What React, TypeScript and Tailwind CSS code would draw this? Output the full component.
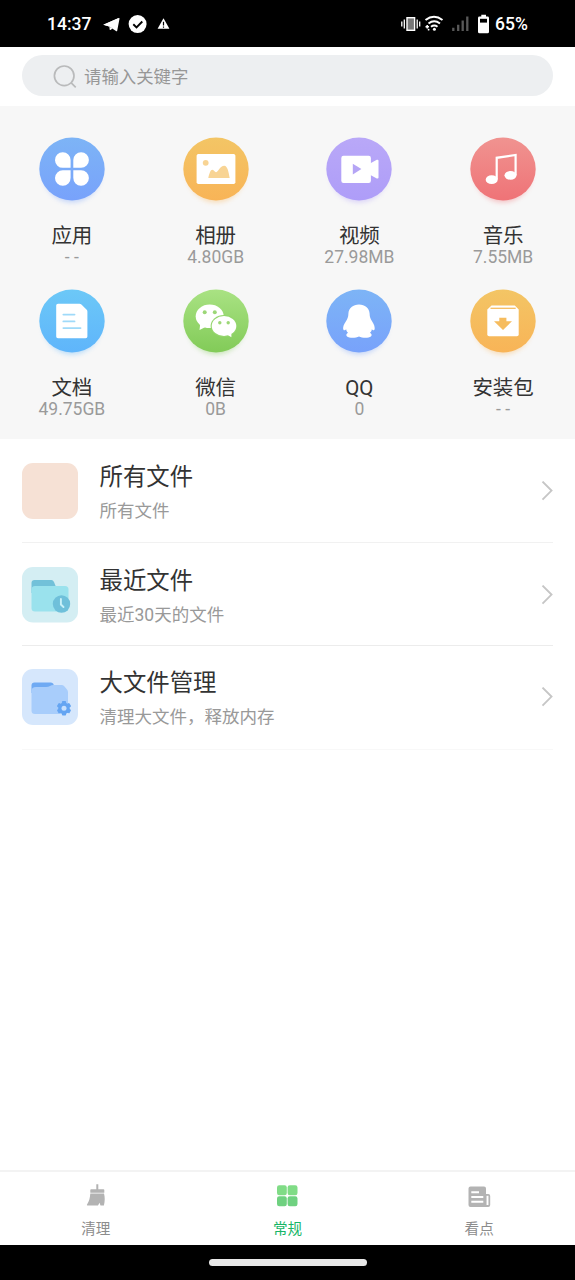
import type { ReactNode } from 'react';

type Category = {
  id: string;
  label: string;
  size: string;
  from: string;
  to: string;
  glyph: ReactNode;
};

const categories: Category[] = [
  {
    id: 'apps',
    label: '应用',
    size: '- -',
    from: '#7db4f6',
    to: '#78a2fb',
    glyph: (
      <>
        <path d="M-1.4-1.2H-9A7.8 7.8 0 1 1-1.4-9Z" />
        <path d="M1.3-1.2H9.1A7.8 7.8 0 1 0 1.3-9Z" />
        <path d="M-1.4 1.2H-9A7.8 7.8 0 1 0-1.4 8.8Z" />
        <path d="M1.3 1.2H9.1A7.8 7.8 0 1 1 1.3 8.8Z" />
      </>
    ),
  },
  {
    id: 'photos',
    label: '相册',
    size: '4.80GB',
    from: '#f3c565',
    to: '#f8b457',
    glyph: (
      <>
        <rect x="-19.4" y="-15" width="38.8" height="30" rx="1.8" />
        <circle cx="-10.3" cy="-6.2" r="2.9" fill="#f8d494" />
        <path
          d="M-7.7 8.9C-6.5 4-5.5 0.8-3.6 0.8C-1.8 0.8-1.5 3.2 0 3.2C2 3.2 4-3.3 8.3-3.3C11.6-3.3 12.7 3.5 13.7 8.9Z"
          fill="#f8d494"
        />
      </>
    ),
  },
  {
    id: 'videos',
    label: '视频',
    size: '27.98MB',
    from: '#b9a8f8',
    to: '#ae9df8',
    glyph: (
      <>
        <rect x="-17.7" y="-13.3" width="29.6" height="27.2" rx="2.2" />
        <path d="M11-5.5 17.8-9.2Q19.5-9.8 19.5-8.2V8.4Q19.5 10 17.8 9.4L11 5.8Z" />
        <path d="M-6.2-5.2 2.4 0.1-6.2 5.4Z" fill="#b5a5f5" />
      </>
    ),
  },
  {
    id: 'music',
    label: '音乐',
    size: '7.55MB',
    from: '#f09390',
    to: '#ef7377',
    glyph: (
      <>
        <ellipse cx="-11.3" cy="10.7" rx="6" ry="4.4" />
        <ellipse cx="7.5" cy="6.3" rx="6" ry="4.4" />
        <path
          d="M-6.3 10.5V-11.2L12.6-14V6"
          fill="none"
          stroke="#fff"
          strokeWidth="2.2"
        />
      </>
    ),
  },
  {
    id: 'docs',
    label: '文档',
    size: '49.75GB',
    from: '#6cc8f7',
    to: '#5fb5fb',
    glyph: (
      <>
        <path d="M-14-17.3H7.5Q8.6-17.3 9.4-16.6L14.7-11.3Q15.4-10.6 15.4-9.5V15.5Q15.4 17.3 13.6 17.3H-14Q-15.8 17.3-15.8 15.5V-15.5Q-15.8-17.3-14-17.3Z" />
        <path
          d="M-8.6-6.4H2.5M-8.6 0.4H2.5M-8.6 7.1H8.5"
          stroke="#9fdaf9"
          strokeWidth="1.9"
          strokeLinecap="round"
        />
      </>
    ),
  },
  {
    id: 'wechat',
    label: '微信',
    size: '0B',
    from: '#a9e283',
    to: '#82cb58',
    glyph: (
      <>
        <ellipse cx="-6.3" cy="-4.7" rx="14" ry="11.8" />
        <path d="M-15.8 3-16.5 9-9.5 5.5Z" />
        <ellipse cx="8" cy="5" rx="13.4" ry="11.1" fill="#94d66d" />
        <ellipse cx="8" cy="5" rx="12.3" ry="10" />
        <path d="M10 13 15.4 16.2 15.4 10Z" />
        <g fill="#9cd777">
          <circle cx="-11.3" cy="-8.7" r="2" />
          <circle cx="-1.2" cy="-8.7" r="2" />
          <circle cx="3.8" cy="1.7" r="1.7" />
          <circle cx="12.2" cy="1.7" r="1.7" />
        </g>
      </>
    ),
  },
  {
    id: 'qq',
    label: 'QQ',
    size: '0',
    from: '#7db4f6',
    to: '#78a2fb',
    glyph: (
      <path d="M0-16.5C6-16.5 10.2-13 10.6-7.5C10.7-5 11-3.5 12-1.5C13.8 1.5 15.6 4 15.7 7C15.8 9.8 14.2 9.8 12.8 8.2C12.8 9.5 12 10.9 11 11.8C13.9 13.4 13 16.5 8 16.8C4.5 17 2 16.4 0 15.4C-2 16.4-4.5 17-8 16.8C-13 16.5-13.9 13.4-11 11.8C-12 10.9-12.8 9.5-12.8 8.2C-14.2 9.8-15.9 9.8-15.9 7C-15.7 4-13.8 1.5-12-1.5C-11-3.5-10.7-5-10.6-7.5C-10.2-13-6-16.5 0-16.5Z" />
    ),
  },
  {
    id: 'packages',
    label: '安装包',
    size: '- -',
    from: '#f3c565',
    to: '#f8b457',
    glyph: (
      <>
        <path d="M-11.5-15.4H11.8L15.7-11.5V13.5Q15.7 15.3 13.9 15.3H-13.9Q-15.7 15.3-15.7 13.5V-11.5Z" />
        <path d="M-12.5-12.7H12.7" stroke="#f6bc5e" strokeWidth="1.3" />
        <path d="M-3.7-3.2H3.4V0.2H9L0 9-9 0.2H-3.7Z" fill="#f6bc5e" />
      </>
    ),
  },
];

const CategoryIcon = ({ id, from, to, glyph }: Category) => (
  <svg className="w-20 h-20" viewBox="-40 -40 80 80">
    <defs>
      <linearGradient id={`fill-${id}`} x1="0" y1="0" x2="0" y2="1">
        <stop offset="0" stopColor={from} />
        <stop offset="1" stopColor={to} />
      </linearGradient>
      <filter id={`blur-${id}`} x="-30%" y="-30%" width="160%" height="160%">
        <feGaussianBlur stdDeviation="2.5" />
      </filter>
    </defs>
    <ellipse cx="0" cy="4" rx="29" ry="29.5" fill={to} opacity="0.4" filter={`url(#blur-${id})`} />
    <ellipse cx="0" cy="0" rx="32.7" ry="31.4" fill={`url(#fill-${id})`} />
    <g fill="#fff">{glyph}</g>
  </svg>
);

const RecentIcon = () => (
  <svg className="w-14 h-14" viewBox="0 0 56 56">
    <rect width="56" height="55.5" rx="11" fill="#d4eef3" />
    <path d="M9.500 24V16Q9.500 13 12.500 13H29.500Q31 13 32 15L34 20V26H9.500Z" fill="#72c1d9" />
    <rect x="9.5" y="19" width="37" height="25.5" rx="3.5" fill="#9ae2ed" />
    <circle cx="39.5" cy="37" r="8.7" fill="#6fc0da" />
    <path d="M38.9 32V37.5L41.5 40" fill="none" stroke="#c9f1f8" strokeWidth="1.9" strokeLinecap="round" />
  </svg>
);

const LargeIcon = () => (
  <svg className="w-14 h-14" viewBox="0 0 56 56">
    <rect width="56" height="56" rx="11" fill="#d6e7fc" />
    <path d="M9.5 24V16.5Q9.5 13.5 12.5 13.5H29Q30.500 13.500 31.500 15L32 20V24Z" fill="#6faaf3" />
    <path d="M9.5 22Q9.5 18 14 18H24Q26.500 18 28 17Q29.500 16 31.500 16H40Q41.500 16 42.500 17.500L45 20.500Q46 21.500 46 23.500V41.500Q46 45 42.500 45H13Q9.500 45 9.500 41.500Z" fill="#a8cdfb" />
    <g fill="#65a5f2">
      <circle cx="42" cy="39.2" r="5.7" />
      <rect x="39.9" y="32" width="4.2" height="14.4" rx="1" />
      <rect x="39.9" y="32" width="4.2" height="14.4" rx="1" transform="rotate(60 42 39.2)" />
      <rect x="39.9" y="32" width="4.2" height="14.4" rx="1" transform="rotate(120 42 39.2)" />
    </g>
    <circle cx="42" cy="39.2" r="2.5" fill="#c7e0fe" />
  </svg>
);

const folders = [
  {
    title: '所有文件',
    subtitle: '所有文件',
    icon: <div className="w-14 h-14 rounded-[11px] bg-[#f6e1d5]" />,
    row: 'h-[104px] border-[#f1f1f1]',
  },
  {
    title: '最近文件',
    subtitle: '最近30天的文件',
    icon: <RecentIcon />,
    row: 'h-[103px] pt-px border-[#ececec]',
  },
  {
    title: '大文件管理',
    subtitle: '清理大文件，释放内存',
    icon: <LargeIcon />,
    row: 'h-[104px] pb-px border-[#f8f8f8]',
  },
];

const tabs = [
  {
    label: '清理',
    color: 'text-[#8c8c8c]',
    icon: (
      <svg className="w-7 h-7" viewBox="0 0 28 28" fill="#b3b3b3">
        <path d="M14.3 2.3H16.3V7.3H21.5Q22.3 7.3 22.3 8.1V10.8H8.3V8.1Q8.3 7.3 9.1 7.3H14.3Z" />
        <path d="M8.3 11.6H22C23 15 23 19.300 21.900 23.500H18.500L17.500 20.800 16 23.500H5.300Q4.400 23.200 5.300 22C7.200 19.500 7.900 16 8.300 11.600Z" />
      </svg>
    ),
  },
  {
    label: '常规',
    color: 'text-[#16b567]',
    icon: (
      <svg className="w-7 h-7" viewBox="0 0 28 28">
        <rect x="4" y="3.3" width="9.8" height="10" rx="2.2" fill="#80dc86" />
        <rect x="14.6" y="3.3" width="9.9" height="10" rx="2.2" fill="#80dc86" />
        <rect x="4" y="14.2" width="9.8" height="10" rx="2.2" fill="#6fd180" />
        <rect x="14.6" y="14.2" width="9.9" height="10" rx="2.2" fill="#6fd180" />
      </svg>
    ),
  },
  {
    label: '看点',
    color: 'text-[#8c8c8c]',
    icon: (
      <svg className="w-7 h-7" viewBox="0 0 28 28">
        <path d="M5.500 4.500H19Q21 4.500 21 6.500V12H23.200Q25.200 12 25.200 14V23Q25.200 25 23.200 25H5.500Q3.500 25 3.500 23V6.500Q3.500 4.500 5.500 4.500Z" fill="#b3b3b3" />
        <path d="M6.300 10.200H14M6.300 15H18.300M6.300 19.800H18.300" stroke="#fff" strokeWidth="1.9" />
        <path d="M22.500 13.800V23" stroke="#fff" strokeWidth="1.9" />
      </svg>
    ),
  },
];

const StatusBar = () => (
  <div className="h-[47px] shrink-0 bg-black flex items-center text-white text-[17.5px] font-medium px-[47px]">
    <span className="w-14 pt-0.5">14:37</span>
    <svg className="w-[68px] h-6" viewBox="103 11.5 68 24" fill="#fff">
      <path d="M103.300 24.200 118.700 17.500Q119.700 17.100 119.500 18.200L117.200 30.200Q116.900 31.200 116 30.600L109.200 26.100Z" />
      <path d="M103.300 24.200 119.300 17.300 109.200 26.100Z" />
      <path d="M109.300 26 109.800 29.400Q110.300 29.800 112.400 27.900Z" />
      <circle cx="137.6" cy="23.6" r="9" />
      <path d="M133.3 23.8 136.5 26.9 142.3 21" fill="none" stroke="#000" strokeWidth="1.9" />
      <path d="M163.5 17.800 169.400 28.200H157.600Z" />
      <path d="M163.5 21.300V24.900M163.500 26V27.300" stroke="#000" strokeWidth="1.2" />
    </svg>
    <svg className="w-[92px] h-6 ml-auto" viewBox="401 11.5 92 24">
      <rect x="407" y="17.2" width="7.6" height="12.6" fill="#777" stroke="#fff" strokeWidth="1.4" />
      <path d="M404.3 19V28M401.8 21V26M417.2 19V28M419.7 21V26" stroke="#fff" strokeWidth="1.3" />
      <path d="M425.5 19.5Q434 13 442.500 19.500M428.500 23Q434.200 18.500 440 23M431 26.300Q434.300 23.800 437.500 26.300" fill="none" stroke="#fff" strokeWidth="2" />
      <circle cx="434.4" cy="28.7" r="1.5" fill="#fff" />
      <path d="M425.5 26.200H429M427.200 24.400V27.900" stroke="#fff" strokeWidth="1.5" />
      <circle cx="428.6" cy="29.2" r="0.9" fill="#fff" />
      <path d="M453.3 27.2V30.6M458.2 24.3V30.6M462.7 20V30.6M467.3 16V30.6" stroke="#595959" strokeWidth="2.3" />
      <path d="M481.3 14.2H486V16H487.6Q489 16 489 17.4V31.3Q489 32.8 487.6 32.8H479.5Q478 32.8 478 31.3V17.4Q478 16 479.5 16H481.3Z" fill="#fff" />
      <rect x="480" y="18.3" width="7" height="3.8" fill="#000" />
    </svg>
    <span className="ml-[2px] w-[33px] pt-0.5 whitespace-nowrap">65%</span>
  </div>
);

export default function App() {
  return (
    <div className="w-[575px] h-[1280px] flex flex-col bg-white overflow-hidden font-[Roboto,'Noto_Sans_CJK_SC',sans-serif]">
      <StatusBar />

      {/* Search */}
      <div className="h-[59px] shrink-0 px-[22px] pt-2">
        <div className="h-[41px] rounded-full bg-[#edeff1] flex items-center pl-[31px] text-[17.4px] text-[#979797]">
          <svg className="w-6 h-6 mr-[7px]" viewBox="0 0 24 24" fill="none" stroke="#b9babb" strokeWidth="1.7">
            <circle cx="11.2" cy="11.8" r="9.8" />
            <path d="M18.2 18.8 22.7 23.3" />
          </svg>
          <span className="pt-[3px]">请输入关键字</span>
        </div>
      </div>

      {/* Categories */}
      <div className="h-[333px] shrink-0 bg-[#f7f7f7] pt-[23px] grid grid-cols-4 auto-rows-max gap-y-[14px]">
        {categories.map((category) => (
          <div key={category.id} className="flex flex-col items-center">
            <CategoryIcon {...category} />
            <div className="mt-[15px] h-[23px] leading-6 text-[20.5px] text-[#333]">{category.label}</div>
            <div className="h-5 leading-5 text-[17.5px] text-[#9a9a9a]">{category.size}</div>
          </div>
        ))}
      </div>

      {/* Folders */}
      <div className="flex-1 px-[22px]">
        {folders.map((folder) => (
          <div key={folder.title} className={`flex items-center border-b ${folder.row}`}>
            {folder.icon}
            <div className="ml-[21.5px] flex-1 pt-[5px]">
              <div className="h-[35px] leading-9 text-[23.4px] text-[#333]">{folder.title}</div>
              <div className="h-[34px] leading-[34px] text-[17.5px] text-[#999]">{folder.subtitle}</div>
            </div>
            <svg className="w-3 h-5" viewBox="0 0 12 20" fill="none" stroke="#c6c6c6" strokeWidth="1.9">
              <path d="M1.5 0.6 10.5 9.6 1.5 18.6" />
            </svg>
          </div>
        ))}
      </div>

      {/* Bottom tabs */}
      <div className="h-[75px] shrink-0 border-t-2 border-[#f3f3f3] grid grid-cols-3">
        {tabs.map((tab) => (
          <div key={tab.label} className="flex flex-col items-center pt-[10px]">
            {tab.icon}
            <span className={`mt-2 leading-[22px] text-[14.6px] ${tab.color}`}>{tab.label}</span>
          </div>
        ))}
      </div>
      <div className="h-[35px] shrink-0 bg-black flex items-center justify-center">
        <div className="w-[158px] h-[7px] rounded-full bg-[#e8e8e8]" />
      </div>
    </div>
  );
}
